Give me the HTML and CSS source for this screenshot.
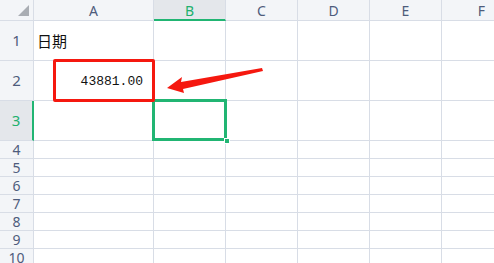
FILE: index.html
```html
<!DOCTYPE html>
<html>
<head>
<meta charset="utf-8">
<link rel="stylesheet" href="styles.css">
</head>
<body>
<div class="sheet">
  <div class="grid">
    <div class="hd corner"><span class="tri"></span></div>
    <div class="hd col">A</div>
    <div class="hd col sel-col">B</div>
    <div class="hd col">C</div>
    <div class="hd col">D</div>
    <div class="hd col">E</div>
    <div class="hd col">F</div>

    <div class="hd row tall">1</div>
    <div class="c text-cell">日期</div><div class="c"></div><div class="c"></div><div class="c"></div><div class="c"></div><div class="c"></div>

    <div class="hd row tall">2</div>
    <div class="c num-cell">43881.00</div><div class="c"></div><div class="c"></div><div class="c"></div><div class="c"></div><div class="c"></div>

    <div class="hd row tall sel-row">3</div>
    <div class="c"></div><div class="c"></div><div class="c"></div><div class="c"></div><div class="c"></div><div class="c"></div>

    <div class="hd row">4</div>
    <div class="c"></div><div class="c"></div><div class="c"></div><div class="c"></div><div class="c"></div><div class="c"></div>
    <div class="hd row">5</div>
    <div class="c"></div><div class="c"></div><div class="c"></div><div class="c"></div><div class="c"></div><div class="c"></div>
    <div class="hd row">6</div>
    <div class="c"></div><div class="c"></div><div class="c"></div><div class="c"></div><div class="c"></div><div class="c"></div>
    <div class="hd row">7</div>
    <div class="c"></div><div class="c"></div><div class="c"></div><div class="c"></div><div class="c"></div><div class="c"></div>
    <div class="hd row">8</div>
    <div class="c"></div><div class="c"></div><div class="c"></div><div class="c"></div><div class="c"></div><div class="c"></div>
    <div class="hd row">9</div>
    <div class="c"></div><div class="c"></div><div class="c"></div><div class="c"></div><div class="c"></div><div class="c"></div>
    <div class="hd row">10</div>
    <div class="c"></div><div class="c"></div><div class="c"></div><div class="c"></div><div class="c"></div><div class="c"></div>
  </div>

  <div class="selection"><span class="handle"></span></div>
  <div class="redbox"></div>
  <svg class="arrow" width="494" height="263" viewBox="0 0 494 263">
    <polygon points="167,88 182,77 181,82 262,68 263,71 183,89 184,93" fill="#f5180f"/>
  </svg>
</div>
</body>
</html>
```

FILE: styles.css
```css
* { box-sizing: border-box; }
html, body { margin: 0; padding: 0; background: #fff; }
body { width: 494px; height: 263px; overflow: hidden; }

.sheet { position: relative; width: 494px; height: 263px; overflow: hidden; }

.grid {
  display: grid;
  grid-template-columns: 34px 120px 72px 72px 72px 72px 80px;
  grid-template-rows: 21px 40px 40px 40px repeat(7, 18px);
  width: 542px;
}

.hd {
  background: #f3f5f8;
  border-right: 1px solid #d8dde6;
  border-bottom: 1px solid #d8dde6;
  color: #4e5c7c;
  font-family: "Noto Sans", "Open Sans", sans-serif;
  font-size: 14px;
  display: flex;
  align-items: center;
  justify-content: center;
  line-height: 1;
  overflow: hidden;
}

.corner { position: relative; }
.tri {
  position: absolute;
  left: 18px;
  top: 5px;
  width: 11px;
  height: 11px;
  background: #a9adb3;
  clip-path: polygon(100% 0, 100% 100%, 0 100%);
}

.col { padding-top: 1px; }
.sel-col {
  background: #e4e7eb;
  color: #21b06e;
  border-bottom: 2px solid #21b573;
  padding-top: 2px;
}

.row { font-size: 14px; }
.tall { font-size: 15px; }
.sel-row {
  background: #e4e7eb;
  color: #21b06e;
  border-right: 2px solid #21b573;
}

.c {
  border-right: 1px solid #d8dde6;
  border-bottom: 1px solid #d8dde6;
  background: #fff;
}

.text-cell {
  font-family: "Noto Sans CJK SC", "Noto Sans", sans-serif;
  font-size: 15px;
  color: #111;
  display: flex;
  align-items: center;
  padding-left: 3px;
}

.num-cell {
  font-family: "Liberation Mono", "DejaVu Sans Mono", monospace;
  font-size: 13px;
  color: #111;
  display: flex;
  align-items: center;
  justify-content: flex-end;
  padding-right: 10px;
  padding-top: 1px;
}

.selection {
  position: absolute;
  left: 152px;
  top: 99px;
  width: 75px;
  height: 42px;
  border: 3px solid #21b573;
}
.handle {
  position: absolute;
  right: -6px;
  bottom: -6px;
  width: 6px;
  height: 6px;
  background: #21b573;
  border: 1px solid #fff;
}

.redbox {
  position: absolute;
  left: 53px;
  top: 59px;
  width: 102px;
  height: 43px;
  border: 3px solid #f5180f;
  border-radius: 2px;
}

.arrow { position: absolute; left: 0; top: 0; }
```
